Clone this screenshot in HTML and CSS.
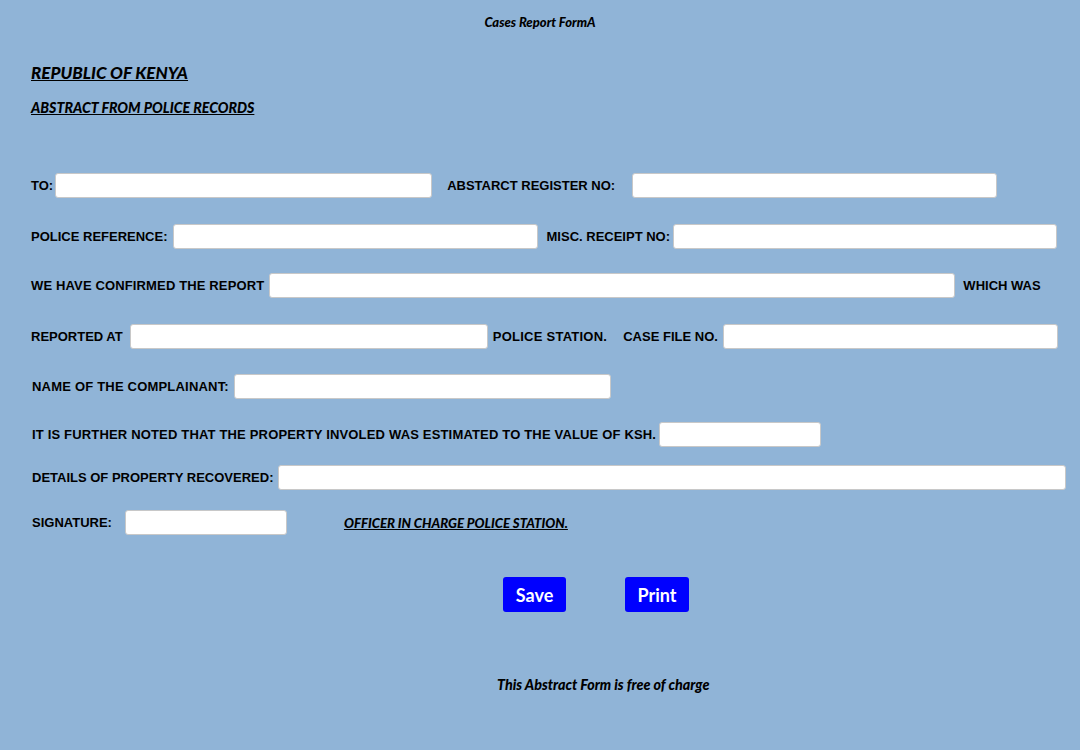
FILE: index.html
```html
<!DOCTYPE html>
<html>
<head>
<meta charset="utf-8">
<title>Cases Report FormA</title>
<link rel="stylesheet" href="styles.css">
</head>
<body>
<div class="page">
  <div class="top-title">Cases Report FormA</div>
  <h1 class="republic">REPUBLIC OF KENYA</h1>
  <h2 class="abstract">ABSTRACT FROM POLICE RECORDS</h2>

  <form class="form">
    <div class="row r1">
      <label class="lbl">TO:</label>
      <input class="inp w-to" type="text">
      <label class="lbl ml-reg">ABSTARCT REGISTER NO:</label>
      <input class="inp w-reg" type="text">
    </div>
    <div class="row r2">
      <label class="lbl">POLICE REFERENCE:</label>
      <input class="inp w-ref" type="text">
      <label class="lbl ml-misc">MISC. RECEIPT NO:</label>
      <input class="inp w-misc" type="text">
    </div>
    <div class="row r3">
      <label class="lbl conf">WE HAVE CONFIRMED THE REPORT</label>
      <input class="inp w-conf" type="text">
      <span class="lbl ml-which">WHICH WAS</span>
    </div>
    <div class="row r4">
      <label class="lbl">REPORTED AT</label>
      <input class="inp w-at" type="text">
      <span class="lbl ml-ps">POLICE STATION.</span>
      <label class="lbl ml-case">CASE FILE NO.</label>
      <input class="inp w-case" type="text">
    </div>
    <div class="row r5">
      <label class="lbl name">NAME OF THE COMPLAINANT:</label>
      <input class="inp w-name" type="text">
    </div>
    <div class="row r6">
      <label class="lbl wide">IT IS FURTHER NOTED THAT THE PROPERTY INVOLED WAS ESTIMATED TO THE VALUE OF KSH.</label>
      <input class="inp w-ksh" type="text">
    </div>
    <div class="row r7">
      <label class="lbl">DETAILS OF PROPERTY RECOVERED:</label>
      <input class="inp w-det" type="text">
    </div>
    <div class="row r8">
      <label class="lbl">SIGNATURE:</label>
      <input class="inp w-sig" type="text">
      <span class="officer">OFFICER IN CHARGE POLICE STATION.</span>
    </div>
    <div class="buttons">
      <button type="button" class="btn btn-save">Save</button>
      <button type="button" class="btn btn-print">Print</button>
    </div>
  </form>

  <p class="footer-note">This Abstract Form is free of charge</p>
</div>
</body>
</html>
```

FILE: styles.css
```css
html, body {
  margin: 0;
  padding: 0;
  background: #90b4d7;
}
body {
  width: 1080px;
  height: 750px;
  overflow: hidden;
  font-family: "Liberation Sans", Arial, sans-serif;
  color: #000;
}
.page {
  padding: 0 0 0 31px;
}
.top-title {
  font-family: Lato, sans-serif;
  font-weight: 900;
  font-style: italic;
  font-size: 13px;
  text-align: center;
  margin-left: -31px;
  padding-top: 14px;
  line-height: 16px;
}
.republic {
  font-family: Lato, sans-serif;
  font-weight: 900;
  font-style: italic;
  font-size: 17px;
  text-decoration: underline;
  margin: 0;
  padding-top: 33px;
  line-height: 20px;
}
.abstract {
  font-family: Lato, sans-serif;
  font-weight: 900;
  font-style: italic;
  font-size: 14.2px;
  text-decoration: underline;
  margin: 0;
  padding-top: 17px;
  line-height: 16px;
}
.form {
  margin: 0;
}
.row {
  display: flex;
  align-items: center;
  height: 25px;
}
.r1 { margin-top: 57px; }
.r2 { margin-top: 26px; }
.r3 { margin-top: 24px; }
.r4 { margin-top: 26px; }
.r5 { margin-top: 25px; padding-left: 1px; }
.r6 { margin-top: 23px; padding-left: 1px; }
.r7 { margin-top: 18px; padding-left: 1px; }
.r8 { margin-top: 20px; padding-left: 1px; }

.lbl {
  font-weight: 700;
  font-size: 13px;
  white-space: nowrap;
}
.wide {
  letter-spacing: 0.17px;
}
.conf {
  letter-spacing: 0.14px;
}
.name {
  letter-spacing: 0.2px;
}
.inp {
  height: 25px;
  box-sizing: border-box;
  border: 1px solid #c8c8c8;
  border-radius: 3px;
  background: #fff;
  margin: 0 0 0 2px;
  padding: 0 4px;
  font-size: 13px;
}
.w-to { width: 377px; margin-left: 2px; }
.ml-reg { margin-left: 15px; }
.w-reg { width: 365px; margin-left: 17px; }
.w-ref { width: 365px; margin-left: 5px; }
.ml-misc { margin-left: 9px; }
.w-misc { width: 384px; margin-left: 3px; }
.w-conf { width: 686px; margin-left: 5px; }
.ml-which { margin-left: 8px; }
.w-at { width: 358px; margin-left: 7px; }
.ml-ps { margin-left: 5px; letter-spacing: 0.25px; }
.ml-case { margin-left: 16px; }
.w-case { width: 335px; margin-left: 5px; }
.w-name { width: 377px; margin-left: 5px; }
.w-ksh { width: 162px; margin-left: 3px; }
.w-det { width: 788px; margin-left: 4px; }
.w-sig { width: 162px; margin-left: 13px; }
.officer {
  font-family: Lato, sans-serif;
  font-weight: 900;
  font-style: italic;
  font-size: 13.2px;
  text-decoration: underline;
  margin-left: 57px;
}
.buttons {
  display: flex;
  gap: 59px;
  margin-top: 42px;
  padding-left: 472px;
}
.btn {
  background: #0000ff;
  color: #fff;
  border: none;
  border-radius: 3px;
  font-family: Lato, sans-serif;
  font-weight: 700;
  font-size: 18px;
  height: 35px;
  padding: 0;
}
.btn-save { width: 63px; }
.btn-print { width: 64px; }
.footer-note {
  font-family: Lato, sans-serif;
  font-weight: 900;
  font-style: italic;
  font-size: 14.3px;
  margin: 64px 0 0 466px;
  line-height: 17px;
}
```
